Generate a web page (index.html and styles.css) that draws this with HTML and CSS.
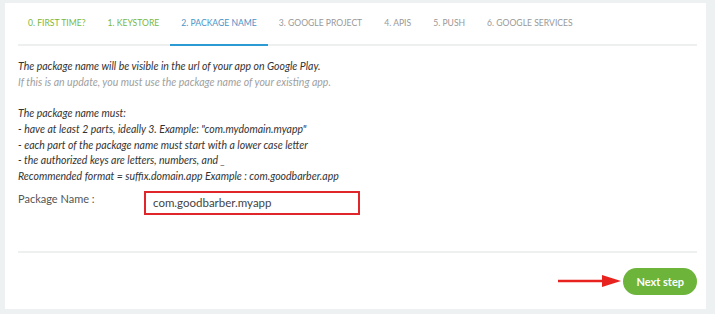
FILE: index.html
```html
<!DOCTYPE html>
<html lang="en">
<head>
  <meta charset="UTF-8">
  <title>Package name</title>
  <link rel="stylesheet" href="styles.css">
</head>
<body>
  <div class="panel">
    <ul class="tabs">
      <li class="done">0. First time?</li>
      <li class="done">1. Keystore</li>
      <li class="active">2. Package name</li>
      <li>3. Google project</li>
      <li>4. APIs</li>
      <li>5. Push</li>
      <li>6. Google services</li>
    </ul>

    <div class="info">
      <p>The package name will be visible in the url of your app on Google Play.<br>
        <span class="muted">If this is an update, you must use the package name of your existing app.</span></p>
      <p>The package name must:<br>
        - have at least 2 parts, ideally 3. Example: "com.mydomain.myapp"<br>
        - each part of the package name must start with a lower case letter<br>
        - the authorized keys are letters, numbers, and _<br>
        Recommended format = suffix.domain.app Example : com.goodbarber.app</p>
    </div>

    <div class="field">
      <label for="pkg">Package Name :</label>
      <input id="pkg" type="text" value="com.goodbarber.myapp">
    </div>

    <div class="footer">
      <svg class="arrow" width="63" height="14" viewBox="0 0 63 14">
        <line x1="0" y1="7" x2="48" y2="7" stroke="#e8231f" stroke-width="2.5"/>
        <polygon points="44,1 63,7 44,13" fill="#e8231f"/>
      </svg>
      <button class="button">Next step</button>
    </div>
  </div>
</body>
</html>
```

FILE: styles.css
```css
body {
  margin: 0;
  background-color: #eef1f2;
  font-family: Lato, "Open Sans", sans-serif;
  color: #555;
  padding: 3px 9px 5px 5px;
}
.panel {
  background-color: white;
  height: 306px;
  padding: 0 9px 0 13px;
  box-sizing: border-box;
}
.tabs {
  list-style: none;
  margin: 0;
  padding: 0;
  display: flex;
  border-bottom: 2px solid #eef0f0;
  height: 41px;
}
.tabs li {
  text-transform: uppercase;
  font-size: 8.6px;
  color: #999;
  padding: 15px 11px 0;
  margin-bottom: -2px;
}
.tabs li:first-child {
  padding-left: 10px;
}
.tabs li.done {
  color: #7ab83c;
}
.tabs li.active {
  color: #4a94c7;
  border-bottom: 2px solid #2d9bd3;
}
.info {
  padding-top: 13px;
}
.info p {
  margin: 0 0 15.7px;
  font-style: italic;
  font-size: 10.5px;
  line-height: 15.7px;
  color: #333;
}
.info p:last-child {
  margin-bottom: 0;
}
.info .muted {
  color: #a0a0a0;
}
.field {
  display: flex;
  align-items: flex-start;
  padding-top: 6px;
  height: 60px;
  border-bottom: 2px solid #eef0f0;
}
.field label {
  font-size: 11px;
  line-height: 14px;
  width: 126px;
  padding-top: 1px;
  color: #555;
}
.field input {
  width: 216px;
  height: 24px;
  box-sizing: border-box;
  border: 2px solid #e0262a;
  padding: 0 7px;
  font-family: Lato, "Open Sans", sans-serif;
  font-size: 11.5px;
  color: #444;
  outline: none;
}
.footer {
  display: flex;
  justify-content: flex-end;
  align-items: center;
  padding-top: 15px;
}
.arrow {
  margin-right: 2px;
}
.button {
  background-color: #6cb43a;
  color: white;
  border: none;
  border-radius: 14px;
  height: 27px;
  padding: 0 13px;
  font-family: Lato, "Open Sans", sans-serif;
  font-size: 11px;
  font-weight: bold;
}
```
